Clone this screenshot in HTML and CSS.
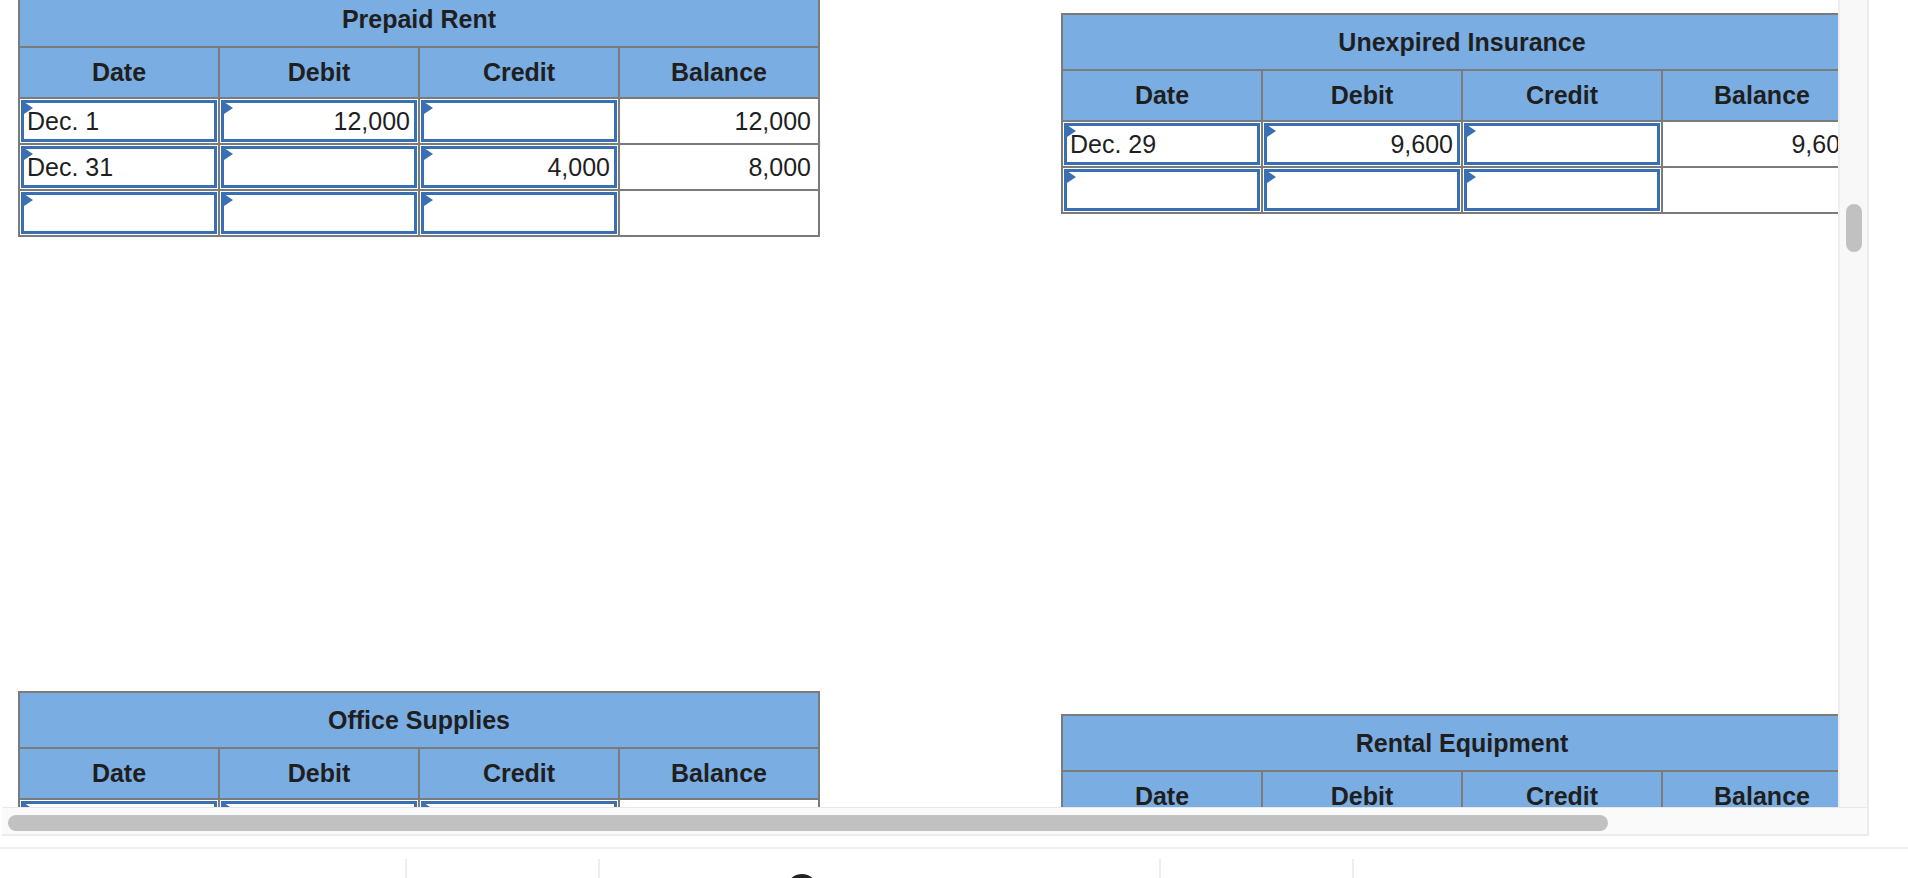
FILE: index.html
```html
<!DOCTYPE html>
<html lang="en">
<head>
<meta charset="utf-8">
<title>Ledger accounts</title>
<link rel="stylesheet" href="styles.css">
</head>
<body>
<div class="frame">
  <div class="frame-top">
    <div class="viewport">
      <div class="grid">
        <div class="cell">
          <table class="ledger">
            <colgroup><col><col><col><col></colgroup>
            <tr class="title"><th colspan="4">Prepaid Rent</th></tr>
            <tr class="heads"><th>Date</th><th>Debit</th><th>Credit</th><th>Balance</th></tr>
            <tr>
              <td><div class="field">Dec. 1</div></td>
              <td><div class="field num">12,000</div></td>
              <td><div class="field num"></div></td>
              <td class="bal">12,000</td>
            </tr>
            <tr>
              <td><div class="field">Dec. 31</div></td>
              <td><div class="field num"></div></td>
              <td><div class="field num">4,000</div></td>
              <td class="bal">8,000</td>
            </tr>
            <tr>
              <td><div class="field"></div></td>
              <td><div class="field num"></div></td>
              <td><div class="field num"></div></td>
              <td class="bal"></td>
            </tr>
          </table>
        </div>
        <div class="cell right">
          <table class="ledger">
            <colgroup><col><col><col><col></colgroup>
            <tr class="title"><th colspan="4">Unexpired Insurance</th></tr>
            <tr class="heads"><th>Date</th><th>Debit</th><th>Credit</th><th>Balance</th></tr>
            <tr>
              <td><div class="field">Dec. 29</div></td>
              <td><div class="field num">9,600</div></td>
              <td><div class="field num"></div></td>
              <td class="bal">9,600</td>
            </tr>
            <tr>
              <td><div class="field"></div></td>
              <td><div class="field num"></div></td>
              <td><div class="field num"></div></td>
              <td class="bal"></td>
            </tr>
          </table>
        </div>
        <div class="cell">
          <table class="ledger">
            <colgroup><col><col><col><col></colgroup>
            <tr class="title"><th colspan="4">Office Supplies</th></tr>
            <tr class="heads"><th>Date</th><th>Debit</th><th>Credit</th><th>Balance</th></tr>
            <tr>
              <td><div class="field"></div></td>
              <td><div class="field num"></div></td>
              <td><div class="field num"></div></td>
              <td class="bal"></td>
            </tr>
            <tr>
              <td><div class="field"></div></td>
              <td><div class="field num"></div></td>
              <td><div class="field num"></div></td>
              <td class="bal"></td>
            </tr>
          </table>
        </div>
        <div class="cell right">
          <table class="ledger">
            <colgroup><col><col><col><col></colgroup>
            <tr class="title"><th colspan="4">Rental Equipment</th></tr>
            <tr class="heads"><th>Date</th><th>Debit</th><th>Credit</th><th>Balance</th></tr>
            <tr>
              <td><div class="field"></div></td>
              <td><div class="field num"></div></td>
              <td><div class="field num"></div></td>
              <td class="bal"></td>
            </tr>
          </table>
        </div>
      </div>
    </div>
    <div class="vbar"><div class="vthumb"></div></div>
  </div>
  <div class="hbar"><div class="hthumb"></div></div>
</div>
<div class="footer">
  <div class="seg seg-a"></div>
  <div class="seg seg-b"></div>
  <div class="seg seg-c">
    <svg class="glyph" width="30" height="12" viewBox="0 0 30 12" aria-hidden="true">
      <path d="M2 12 C4 4 12 2 16 2 C22 2 28 5 29 12 L23 12 C22 9 19 8 16 8 C12 8 9 10 8 12 Z" fill="#222"/>
    </svg>
  </div>
  <div class="seg seg-d"></div>
  <div class="seg seg-e"></div>
</div>
</body>
</html>
```

FILE: styles.css
```css
html, body {
  margin: 0;
  padding: 0;
  background: #ffffff;
}

body {
  width: 1908px;
  height: 878px;
  overflow: hidden;
  font-family: "Liberation Sans", Arial, sans-serif;
  color: #222222;
}

.frame {
  margin-left: 2px;
  width: 1867px;
  height: 836px;
  box-sizing: border-box;
  border-right: 2px solid #ececec;
  border-bottom: 2px solid #ececec;
  display: flex;
  flex-direction: column;
}

.frame-top {
  display: flex;
  height: 807px;
}

.viewport {
  flex: 1;
  overflow: hidden;
  min-width: 0;
}

.grid {
  display: grid;
  grid-template-columns: 802px 802px;
  column-gap: 241px;
  grid-auto-rows: 701px;
  padding-left: 16px;
  margin-top: -10px;
}

.cell.right {
  padding-top: 23px;
}

.vbar {
  width: 27px;
  background: #f8f8f8;
  border-left: 2px solid #eeeeee;
  box-sizing: content-box;
  padding-top: 204px;
}

.vthumb {
  width: 16px;
  height: 48px;
  margin-left: 6px;
  border-radius: 8px;
  background: #c1c1c1;
}

.hbar {
  height: 27px;
  background: #fafafa;
  border-top: 1px solid #e8e8e8;
  padding-top: 7px;
  box-sizing: border-box;
}

.hthumb {
  width: 1600px;
  height: 16px;
  margin-left: 6px;
  border-radius: 8px;
  background: #c1c1c1;
}

/* ledger tables */
.ledger {
  border-collapse: collapse;
  table-layout: fixed;
  width: 802px;
  font-size: 25px;
  color: #1f1f1f;
}

.ledger col {
  width: 25%;
}

.ledger th,
.ledger td {
  border: 2px solid #7b7b7b;
  padding: 0;
}

.ledger th {
  background: #7aade2;
  font-weight: bold;
  text-align: center;
}

.title th {
  height: 54px;
}

.heads th {
  height: 49px;
}

.ledger td {
  height: 42px;
  padding: 1px;
  background: #ffffff;
}

.ledger td.bal {
  text-align: right;
  padding-right: 7px;
}

.field {
  position: relative;
  box-sizing: border-box;
  height: 42px;
  border: 3px solid #3a6fb3;
  background: #ffffff;
  display: flex;
  align-items: center;
  padding: 0 4px 0 3px;
  white-space: nowrap;
}

.field.num {
  justify-content: flex-end;
}

.field::before {
  content: "";
  position: absolute;
  left: -3px;
  top: -3px;
  border-left: 12px solid #3a6fb3;
  border-top: 8px solid transparent;
  border-bottom: 8px solid transparent;
}

/* footer toolbar */
.footer {
  margin-top: 11px;
  border-top: 2px solid #efefef;
  padding-top: 10px;
  display: flex;
  height: 30px;
}

.seg {
  height: 100%;
}

.seg-a {
  width: 405px;
}

.seg-b,
.seg-c,
.seg-d {
  border-left: 2px solid #eeeeee;
}

.seg-b {
  width: 191px;
}

.seg-c {
  width: 559px;
  position: relative;
}

.seg-d {
  width: 191px;
  border-right: 2px solid #eeeeee;
}

.glyph {
  display: block;
  margin-left: 186px;
  margin-top: 13px;
}
```
